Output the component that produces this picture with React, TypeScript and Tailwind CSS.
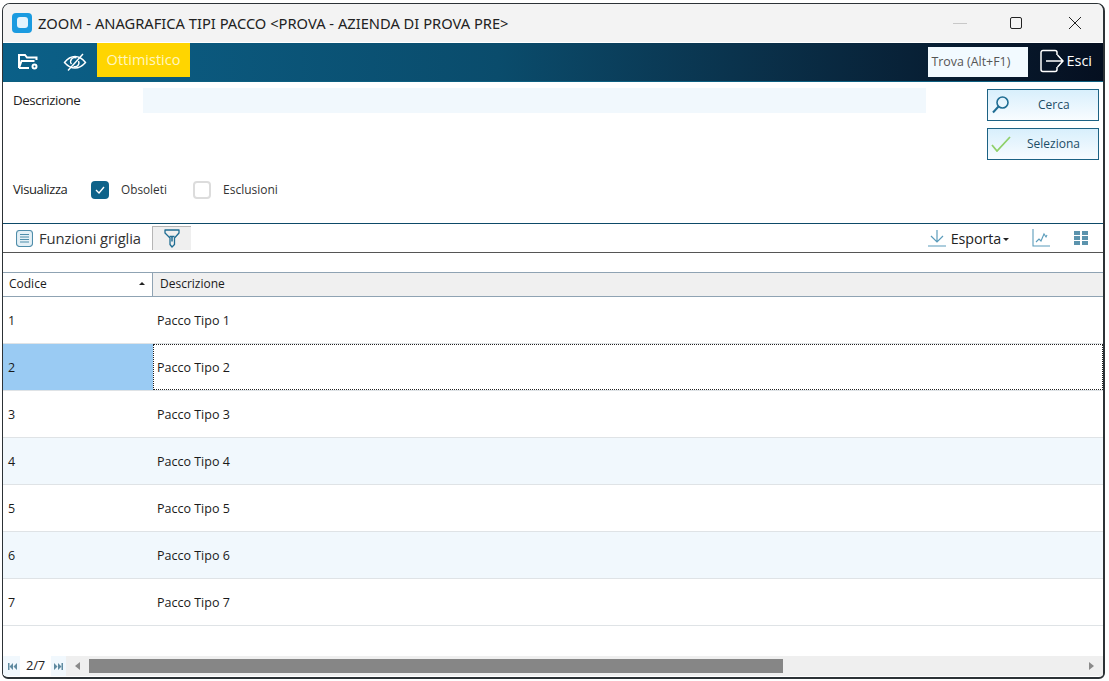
const rows = [
  { code: "1", name: "Pacco Tipo 1" },
  { code: "2", name: "Pacco Tipo 2" },
  { code: "3", name: "Pacco Tipo 3" },
  { code: "4", name: "Pacco Tipo 4" },
  { code: "5", name: "Pacco Tipo 5" },
  { code: "6", name: "Pacco Tipo 6" },
  { code: "7", name: "Pacco Tipo 7" },
];

function AppIcon() {
  return (
    <svg width="20" height="20" viewBox="0 0 20 20">
      <rect x="0" y="0" width="20" height="20" rx="4" fill="#1b9be0" />
      <rect x="5" y="4" width="11" height="11" rx="3" fill="#e4f4fd" />
    </svg>
  );
}

function FolderIcon() {
  return (
    <svg width="24" height="20" viewBox="0 0 24 20" fill="none" stroke="#fff" strokeWidth="2">
      <path d="M3 16V3h6l2 2.500h9.500V8" />
      <path d="M3 16l2.500-7h13" />
      <path d="M3 16h10" />
      <circle cx="18.500" cy="14.500" r="2" />
    </svg>
  );
}

function EyeOffIcon() {
  return (
    <svg width="24" height="20" viewBox="0 0 24 20" fill="none" stroke="#fff" strokeWidth="1.400">
      <path d="M1.500 10.500C5 6 8.500 4.500 12 4.500s7 1.500 10.500 6c-3.500 4-7 5.500-10.500 5.500S5 14.500 1.500 10.500z" />
      <path d="M8.500 12a4 4 0 0 1 5-6" />
      <path d="M15.500 9a4 4 0 0 1-5 5.500" />
      <path d="M5 18.500L20 2" />
    </svg>
  );
}

function ExitIcon() {
  return (
    <svg width="24" height="24" viewBox="0 0 24 24" fill="none" stroke="#fff" strokeWidth="1.500">
      <path d="M17 6V3.500a2 2 0 0 0-2-2H3a2 2 0 0 0-2 2v17a2 2 0 0 0 2 2h12a2 2 0 0 0 2-2V18" />
      <path d="M6 12h17M17.500 6l5.500 6-5.500 6" />
    </svg>
  );
}

function SearchIcon() {
  return (
    <svg width="20" height="20" viewBox="0 0 20 20" fill="none" stroke="#1f6d93" strokeWidth="1.600">
      <circle cx="11.500" cy="7.500" r="5.500" />
      <path d="M7.500 11.500L2 17.500" strokeWidth="2" />
    </svg>
  );
}

function CheckIcon() {
  return (
    <svg width="20" height="16" viewBox="0 0 20 16" fill="none" stroke="#8fd06a" strokeWidth="1.800">
      <path d="M1 9l5 6L19 1" />
    </svg>
  );
}

function ListIcon() {
  return (
    <svg width="17" height="17" viewBox="0 0 17 17" fill="none" stroke="#4f8daa" strokeWidth="1.100">
      <rect x="0.500" y="0.500" width="16" height="16" rx="3" fill="#e4f0f6" />
      <path d="M4 4.500h9M4 7h9M4 9.500h9M4 12h9" />
    </svg>
  );
}

function FilterIcon() {
  return (
    <svg width="16" height="19" viewBox="0 0 16 19" fill="none" stroke="#1f6d93" strokeWidth="1.300" strokeLinejoin="round">
      <path d="M1 1h14v3l-4.500 5v6.500L8 18l-2-2.500V9L1 4z" />
      <path d="M5.500 7.500h5M8 7.500v5" strokeWidth="1.500" />
    </svg>
  );
}

function DownloadIcon() {
  return (
    <svg width="18" height="18" viewBox="0 0 18 18" fill="none" stroke="#5b9cbb" strokeWidth="1.200">
      <path d="M9 1v11M3 7l6 6 6-6M0 17h18" />
    </svg>
  );
}

function ChartIcon() {
  return (
    <svg width="18" height="18" viewBox="0 0 18 18" fill="none" stroke="#5b9cbb" strokeWidth="1.100">
      <path d="M1 0v17h17" />
      <path d="M4 13l3-3 2 2 3-7 2 3 1-2" />
    </svg>
  );
}

function GridIcon() {
  return (
    <svg width="14" height="14" viewBox="0 0 14 14" fill="#5b93ad">
      <rect x="0" y="0" width="6" height="4" />
      <rect x="8" y="0" width="6" height="4" />
      <rect x="0" y="5" width="6" height="4" />
      <rect x="8" y="5" width="6" height="4" />
      <rect x="0" y="10" width="6" height="4" />
      <rect x="8" y="10" width="6" height="4" />
    </svg>
  );
}

function FirstIcon() {
  return (
    <svg width="9" height="7" viewBox="0 0 9 7" fill="#5f8aa0">
      <rect x="0" y="0" width="1.500" height="7" />
      <path d="M5 0v7L1.500 3.500zM9 0v7L5.500 3.500z" />
    </svg>
  );
}

function LastIcon() {
  return (
    <svg width="9" height="7" viewBox="0 0 9 7" fill="#5f8aa0">
      <rect x="7.500" y="0" width="1.500" height="7" />
      <path d="M0 0v7l3.500-3.500zM4 0v7l3.500-3.500z" />
    </svg>
  );
}

export default function App() {
  return (
    <div className="w-[1109px] h-[681px] bg-white pt-[3px] px-[2px] pb-[2px] overflow-hidden font-['Open_Sans','Noto_Sans',sans-serif] text-[12px] text-[#1a1a1a]">
      <div className="w-[1103px] h-[676px] border border-[#2c3236] border-b-2 border-r-2 rounded-t-[8px] rounded-b-[6px] overflow-hidden flex flex-col bg-white">
        {/* titolo */}
        <div className="h-[38px] shrink-0 bg-[#f3f3f3] flex items-center pl-[9px]">
          <AppIcon />
          <span className="ml-[6px] text-[14.700px] text-[#222] font-['Noto_Sans',sans-serif]">ZOOM - ANAGRAFICA TIPI PACCO &lt;PROVA - AZIENDA DI PROVA PRE&gt;</span>
          <div className="ml-auto flex items-center">
            <div className="w-[14px] h-px bg-[#c8c8c8] mr-[44px]" />
            <div className="w-[12px] h-[12px] border border-[#222] rounded-[2px] mr-[46px] -translate-x-[1px]" />
            <svg width="12" height="12" viewBox="0 0 12 12" stroke="#222" strokeWidth="1" className="mr-[22px]">
              <path d="M0 0l12 12M12 0L0 12" />
            </svg>
          </div>
        </div>

        {/* barra comandi */}
        <div className="h-[38px] shrink-0 mt-[1px] flex items-stretch bg-gradient-to-r from-[#0b6088] via-[#0a4c6c] via-45% to-[#050f20]">
          <div className="w-[49px] flex items-center justify-center pb-[1px]"><FolderIcon /></div>
          <div className="w-[45px] flex items-center justify-center"><EyeOffIcon /></div>
          <div className="w-[93px] h-[34px] bg-[#ffd500] text-[#fff5c0] text-[14.500px] flex items-center justify-center">Ottimistico</div>
          <div className="ml-auto flex items-center">
            <div className="w-[100px] h-[30px] bg-[#f2faff] text-[12.400px] text-[#555] flex items-center pl-[3px] mr-[12px]">Trova (Alt+F1)</div>
            <div className="-translate-y-[1px]"><ExitIcon /></div>
            <span className="text-white text-[14.500px] ml-[2px] mr-[11px] -translate-y-[1px]">Esci</span>
          </div>
        </div>

        {/* filtri */}
        <div className="h-[143px] shrink-0 border-t border-[#0d5f80] border-b border-b-[#0d4a68] flex flex-col relative">
          <div className="flex pt-[6px] pr-[4px]">
            <div className="w-[140px] pl-[10px] pt-[3px] text-[13.300px] text-[#222] tracking-[-0.4px]">Descrizione</div>
            <div className="w-[783px] h-[25px] bg-[#f1f8fd]" />
            <div className="ml-auto w-[112px] mt-[1px] flex flex-col gap-[7px]">
              <button className="h-[32px] border border-[#1c6284] bg-gradient-to-b from-[#d8effc] to-[#f8fcff] flex items-center relative pl-[3px]">
                <SearchIcon />
                <span className="absolute left-[50px] text-[12px] text-[#1d4d66]">Cerca</span>
              </button>
              <button className="h-[32px] border border-[#1c6284] bg-gradient-to-b from-[#d8effc] to-[#f8fcff] flex items-center relative pl-[3px]">
                <CheckIcon />
                <span className="absolute left-[39px] text-[12px] text-[#1d4d66]">Seleziona</span>
              </button>
            </div>
          </div>
          <div className="absolute left-[10px] top-[98px] flex items-center h-[20px]">
            <span className="w-[78px] text-[13px] tracking-[-0.4px] text-[#222]">Visualizza</span>
            <div className="w-[18px] h-[18px] rounded-[4px] bg-[#0e6289] flex items-center justify-center">
              <svg width="10" height="8" viewBox="0 0 10 8" fill="none" stroke="#fff" strokeWidth="1.400"><path d="M1 4l3 3 5-6" /></svg>
            </div>
            <span className="ml-[12px] w-[72px] text-[11.800px] text-[#333]">Obsoleti</span>
            <div className="w-[18px] h-[18px] rounded-[4px] border-2 border-[#dcdcdc] bg-white" />
            <span className="ml-[12px] text-[12px] text-[#333]">Esclusioni</span>
          </div>
        </div>

        {/* funzioni griglia */}
        <div className="h-[29px] shrink-0 border-b border-[#555] flex items-center">
          <div className="ml-[13px]"><ListIcon /></div>
          <span className="ml-[6px] text-[14.800px] text-[#333] tracking-[-0.1px]">Funzioni griglia</span>
          <div className="ml-[11px] w-[39px] h-[24px] bg-[#efefef] border-l border-t border-[#b5b5b5] flex items-center justify-center">
            <FilterIcon />
          </div>
          <div className="ml-auto flex items-center">
            <DownloadIcon />
            <span className="ml-[5px] pt-[1px] text-[14.300px] text-[#222] tracking-[-0.1px]">Esporta</span>
            <div className="ml-[2px] mt-[2px] w-0 h-0 border-l-[3px] border-r-[3px] border-t-[3px] border-l-transparent border-r-transparent border-t-[#222]" />
            <div className="ml-[23px]"><ChartIcon /></div>
            <div className="ml-[24px] mr-[15px]"><GridIcon /></div>
          </div>
        </div>

        {/* griglia */}
        <div className="h-[19px] shrink-0" />
        <div className="h-[25px] shrink-0 flex border-t border-b border-[#8fa3b3] bg-[#f0f0f0] text-[12px]">
          <div className="w-[150px] bg-white border-r border-[#8fa3b3] flex items-center justify-between pl-[6px] pr-[7px] pb-[2px]">
            <span>Codice</span>
            <div className="w-0 h-0 border-l-[3px] border-r-[3px] border-b-[3px] border-l-transparent border-r-transparent border-b-[#222]" />
          </div>
          <div className="pl-[7px] flex items-center pb-[2px]">Descrizione</div>
        </div>
        <div className="flex-1 flex flex-col">
          {rows.map((row, i) => {
            const selected = i === 1;
            const alt = i === 3 || i === 5;
            return (
              <div key={row.code} className={`h-[47px] shrink-0 flex border-b border-[#dfe3e6] text-[12.500px] ${alt ? "bg-[#f1f8fd]" : "bg-white"}`}>
                <div className={`w-[150px] flex items-center pl-[5px] pt-[2px] ${selected ? "bg-[#9acbf3]" : ""}`}>{row.code}</div>
                <div className={`flex-1 flex items-center pt-[2px] ${selected ? "border border-dotted border-[#222] pl-[3px]" : "pl-[4px]"}`}>{row.name}</div>
              </div>
            );
          })}
        </div>

        {/* barra inferiore */}
        <div className="h-[20px] shrink-0 flex items-center bg-[#efefef] mb-[1px]">
          <div className="w-[17px] h-full bg-[#f1f8fd] flex items-center justify-center pl-[1px]"><FirstIcon /></div>
          <div className="w-[31px] h-full bg-white flex items-center justify-center text-[13px] text-[#222] tracking-[-0.2px]">2/7</div>
          <div className="w-[15px] h-full bg-[#f1f8fd] flex items-center justify-center"><LastIcon /></div>
          <div className="w-[23px] flex items-center justify-center">
            <div className="w-0 h-0 border-t-[4px] border-b-[4px] border-r-[5px] border-t-transparent border-b-transparent border-r-[#8a8a8a]" />
          </div>
          <div className="w-[694px] h-[14px] bg-[#868686]" />
          <div className="ml-auto mr-[9px] w-0 h-0 border-t-[4px] border-b-[4px] border-l-[5px] border-t-transparent border-b-transparent border-l-[#8a8a8a]" />
        </div>
      </div>
    </div>
  );
}
